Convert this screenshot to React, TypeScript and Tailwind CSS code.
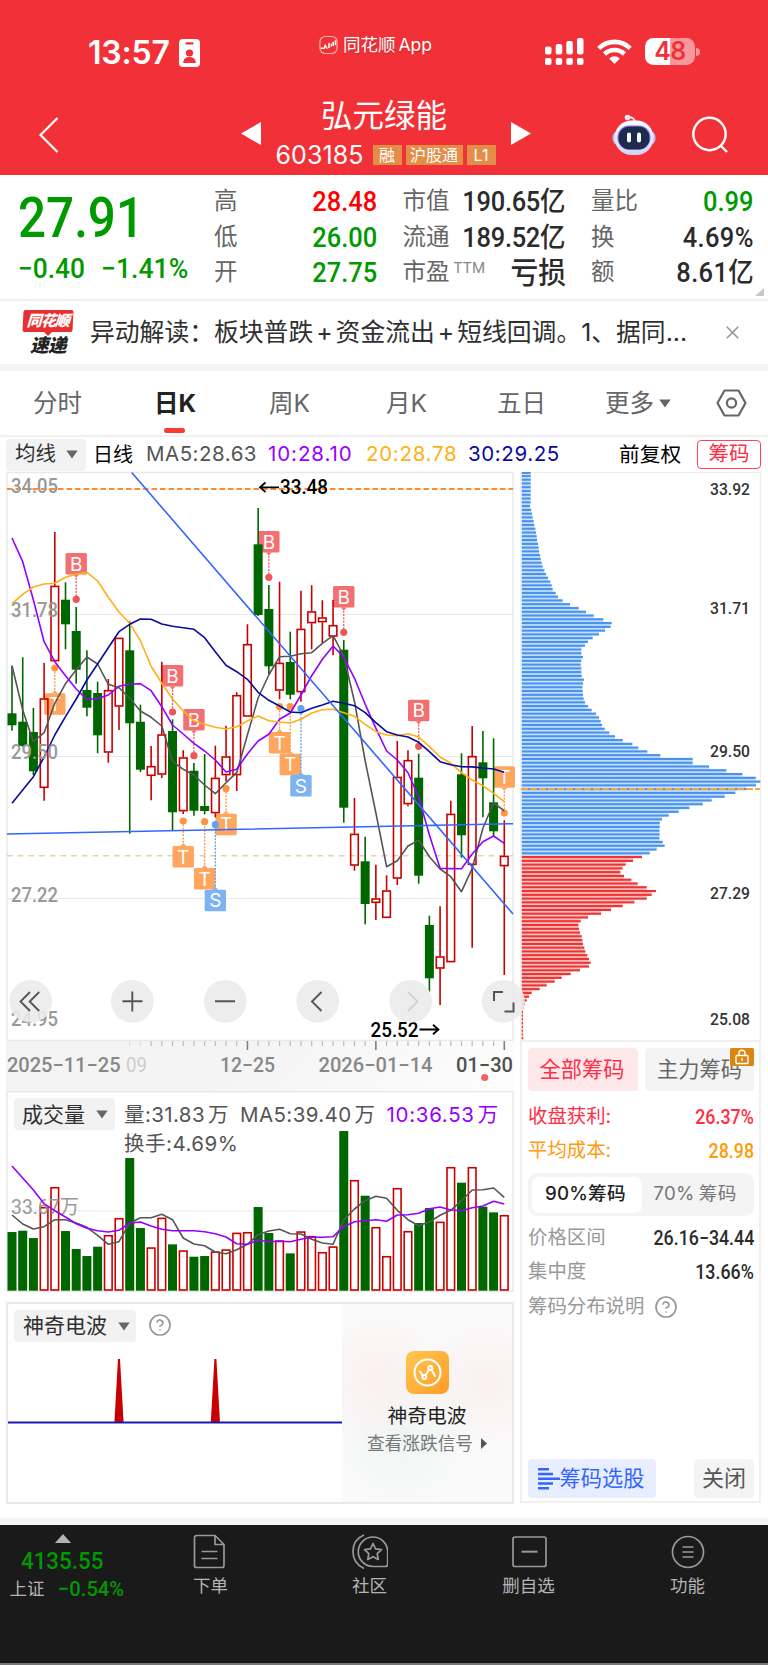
import type { ReactNode } from "react";
import { HelpCircle, X } from "lucide-react";

type Candle = [up: 0 | 1, high: number, top: number, bottom: number, low: number];

const candles: Candle[] = [
  [0, 665.7, 713.3, 725.3, 730.7],
  [0, 657.3, 721.7, 746, 746.7],
  [0, 708, 732, 771.3, 775],
  [1, 663, 698.3, 788, 800.7],
  [1, 532, 585.7, 661.3, 661.3],
  [0, 582.3, 599.7, 624.3, 649.3],
  [0, 607, 631, 669.7, 683.7],
  [0, 650.3, 690, 707.7, 716.3],
  [0, 681.7, 693, 735.3, 753.3],
  [1, 679, 690, 752.7, 762.7],
  [1, 637.7, 637.7, 706.7, 730],
  [0, 621.3, 650.3, 723.3, 833.7],
  [0, 704.7, 721.7, 769.7, 772],
  [1, 746, 766, 776, 800.3],
  [1, 661.7, 734.3, 774.7, 778],
  [0, 719.3, 731, 812.3, 830.7],
  [1, 750.3, 757.3, 811.3, 814],
  [0, 763, 770.7, 810.7, 815.7],
  [0, 754, 806, 811, 814.3],
  [1, 745.7, 777.7, 813.3, 817.3],
  [1, 725.7, 756.3, 775.3, 781.3],
  [1, 692.3, 695, 775.3, 791],
  [1, 624.3, 644, 716.7, 716.7],
  [0, 508, 544.3, 615, 616],
  [0, 585, 609, 666.3, 674],
  [1, 581.7, 662.7, 690.7, 699.3],
  [0, 631.7, 662, 694.7, 699.3],
  [1, 590.7, 628.7, 692.3, 701.7],
  [1, 585.3, 611.3, 623.3, 649.3],
  [1, 600.3, 617.3, 622.3, 643.7],
  [1, 600, 625, 636.7, 655.3],
  [0, 640, 649.7, 807.7, 822.7],
  [1, 798, 833.7, 865.7, 870.7],
  [0, 836.7, 861.3, 904, 924.3],
  [1, 864.7, 898.3, 903, 920],
  [1, 875.3, 890.3, 918, 918],
  [1, 741, 776.7, 878.7, 885],
  [1, 750.3, 760, 804.3, 806.3],
  [0, 753.7, 777.7, 875.7, 883.7],
  [0, 915.7, 925, 978.3, 991.7],
  [1, 906.3, 956.3, 968.7, 1005],
  [1, 800.7, 813.7, 962.3, 962.3],
  [0, 753.3, 774.3, 835.3, 857.7],
  [1, 726, 756, 865, 947.7],
  [0, 731, 762.3, 778.3, 817.3],
  [0, 738.3, 802.3, 831.3, 836],
  [1, 820.3, 855.7, 866.3, 975],
];

const ma5 = [
  665.7, 710, 741.7, 732.7, 703.3, 683.7, 669.7, 657, 664, 684.3, 687.7, 698.3, 711, 717.3, 726, 761.3,
  769.3, 775, 785, 793.7, 782.7, 772.7, 735, 698, 675, 656.7, 656.3, 653.7, 652.7, 643.3, 635.7, 656,
  701.7, 761, 813, 866.7, 860.7, 846, 840.3, 856.7, 869, 876.7, 891.7, 868.3, 828.3, 802.7, 811,
];
const ma10 = [
  538, 561.7, 600, 641.7, 661.7, 675.7, 689, 699.3, 698.7, 695, 686.3, 684, 683.7, 690.7, 706.7, 725,
  734, 743.3, 751, 760, 772, 769.3, 754, 741, 734.3, 719.3, 713, 695, 675.7, 659.3, 646, 657.3, 678.3,
  704.3, 728.3, 751, 760, 772.7, 797.3, 835, 868.3, 868.6, 868.7, 854, 841.7, 836, 843.3,
];
const ma20 = [
  603.7, 594.3, 587, 584, 583.3, 577.3, 574.3, 572.3, 581, 597.3, 612, 623.3, 640.7, 666.3, 683.3, 699,
  710.7, 721, 724.3, 727.3, 729, 726.7, 721, 716, 720.7, 722, 723, 719.3, 713, 709.7, 709.3, 712.7,
  716.3, 724.3, 731.7, 735, 735.7, 733.7, 737, 746.7, 757, 763.3, 772.7, 780, 785.7, 793.3, 801.7,
];
const ma30 = [
  803.3, 790, 776.7, 757, 735, 716.7, 699, 680, 664, 647.7, 631.7, 624.3, 619, 619.3, 624, 626.3, 627.7,
  629.3, 637.7, 651.7, 665.3, 671.7, 679.3, 692.3, 700.3, 706, 712, 712.7, 708.3, 705, 701.3, 703.3,
  705.7, 712.7, 722.7, 731.7, 735, 737, 742.3, 751.7, 761.7, 764.7, 766.7, 766.9, 768, 769, 772.3,
];

const markers: [kind: "B" | "T" | "S", index: number, boxTop: number, dot: number][] = [
  ["B", 6, 553, 599.3],
  ["B", 15, 665, 712],
  ["B", 17, 709, 755.7],
  ["B", 24, 531, 577.3],
  ["B", 31, 586, 632.3],
  ["B", 38, 699.7, 746.3],
  ["T", 4, 693.3, 668],
  ["T", 16, 846, 821],
  ["T", 18, 868, 821.7],
  ["T", 20, 813.7, 788.7],
  ["T", 25, 732, 706.7],
  ["T", 26, 753.7, 706.7],
  ["T", 46, 766.3, 813],
  ["S", 19, 889.7, 824.7],
  ["S", 27, 775, 708.7],
];

const markerColors = {
  B: ["#f27071", "#ee5758"],
  T: ["#ffa55e", "#ff9440"],
  S: ["#7db2f3", "#5ea3ec"],
};

const volumeHeights = [
  176, 180, 158, 251, 311, 179, 125, 104, 132, 167, 218, 398, 188, 130, 219, 139, 121, 102, 104, 118, 124,
  174, 176, 251, 173, 151, 112, 178, 164, 116, 133, 479, 332, 285, 191, 104, 308, 179, 203, 248, 207, 371,
  324, 371, 252, 235, 227,
];
const volMa5 = [
  390, 417, 432, 425, 404, 404, 414, 427, 451, 478, 470, 414, 398, 398, 388, 404, 459, 477, 482, 501, 506,
  494, 478, 449, 438, 433, 446, 447, 463, 474, 478, 404, 372, 347, 334, 340, 376, 404, 422, 411, 391, 376,
  347, 315, 314, 309, 337,
];
const volMa10 = [
  243, 279, 315, 356, 377, 396, 416, 430, 437, 441, 436, 414, 411, 423, 433, 437, 437, 437, 440, 446, 456,
  476, 478, 466, 470, 469, 470, 463, 457, 457, 455, 425, 410, 407, 404, 409, 390, 389, 385, 371, 366, 375,
  377, 368, 363, 349, 357,
];

// chip distribution, one entry per price level, top to bottom
const chips = [
  27, 27, 27, 27, 27, 27, 27, 27, 25, 29, 31, 33, 36, 38, 41, 43, 45, 46, 49, 51, 52, 55, 57, 60, 63, 68,
  73, 79, 86, 90, 93, 102, 109, 123, 145, 171, 193, 216, 245, 270, 267, 250, 232, 213, 199, 190, 179, 179,
  184, 179, 177, 179, 179, 180, 187, 184, 182, 183, 184, 186, 190, 199, 210, 223, 232, 237, 241, 249, 263,
  280, 303, 332, 350, 377, 416, 513, 513, 562, 614, 662, 702, 716, 703, 673, 641, 609, 570, 543, 503, 471,
  441, 421, 414, 414, 413, 414, 413, 423, 429, 405, 384, 361, 334, 312, 303, 296, 307, 329, 348, 375, 403,
  390, 375, 338, 303, 268, 238, 199, 177, 170, 172, 175, 180, 182, 184, 188, 191, 197, 202, 207, 202, 175,
  147, 120, 99, 75, 54, 30, 22, 15, 9, 5, 4, 4, 4, 4, 4, 4, 4, 5,
];
const FIRST_RED_CHIP = 101;

const cx = (i: number) => 12 + i * 10.702;
const toPoints = (ys: number[]) => ys.map((y, i) => `${cx(i).toFixed(1)},${y.toFixed(1)}`).join(" ");

const Label = ({
  x,
  y,
  w,
  size = 20,
  fill = "#999",
  weight = 400,
  children,
}: {
  x: number;
  y: number;
  w: number;
  size?: number;
  fill?: string;
  weight?: number;
  children: string;
}) => (
  <text
    x={x}
    y={y}
    fontSize={size}
    fill={fill}
    fontWeight={weight}
    textLength={w}
    lengthAdjust="spacingAndGlyphs"
    className="font-['Roboto','Noto_Sans_CJK_SC',sans-serif]"
  >
    {children}
  </text>
);

const Caret = () => (
  <svg viewBox="0 0 12 9" className="h-[9px] w-3 shrink-0" fill="#666">
    <path d="M0.3 0.5h11.4L6 8.6z" />
  </svg>
);

const StatusBar = () => (
  <div className="flex h-[104px] items-start pl-[88px]">
    <div className="mt-[34px] flex w-[231px] items-center gap-[8px]">
      <span className="w-[83px] text-[32px] leading-[38px] font-semibold tracking-[-0.2px]">13:57</span>
      <svg viewBox="0 0 21 28" className="h-7 w-[21px]">
        <rect width="21" height="28" rx="4" fill="#fff" />
        <rect x="6.5" y="3.2" width="8" height="2.4" rx="1.2" fill="#f23037" />
        <circle cx="10.5" cy="14" r="3.6" fill="#f23037" />
        <path d="M4.2 24c0-4 2.6-6 6.3-6s6.3 2 6.3 6z" fill="#f23037" />
      </svg>
    </div>
    <div className="mt-[33px] flex w-[225px] items-center gap-[5px] text-shadow-sm">
      <svg viewBox="0 0 20 20" className="h-5 w-[19px]" fill="none" stroke="#fff" strokeLinecap="round">
        <rect x="1" y="1" width="18" height="18" rx="5.5" strokeWidth="1.2" stroke="#ffb0b0" />
        <path d="M2.500 13.500h3l1-3 2 3" strokeWidth="1.500" />
        <path d="M10.500 8.500v4M13 9v2M15 7v3.500M17.300 5.500v4" strokeWidth="1.600" />
      </svg>
      <span className="text-[17.500px] leading-6 whitespace-nowrap">
        同花顺<span className="ml-[3px]">App</span>
      </span>
    </div>
    <svg viewBox="0 0 40 27" className="mt-[38px] h-[27px] w-10" fill="#fff">
      <rect x="1" y="8.500" width="6.500" height="8" rx="2" />
      <rect x="11.700" y="6" width="6.500" height="10.500" rx="2" />
      <rect x="22.300" y="3" width="6.500" height="13.500" rx="2" />
      <rect x="33" y="0" width="6.500" height="16.500" rx="2" />
      <rect x="1" y="20" width="6.500" height="7" rx="2" />
      <rect x="11.700" y="20" width="6.500" height="7" rx="2" />
      <rect x="22.300" y="20" width="6.500" height="7" rx="2" />
      <rect x="33" y="20" width="6.500" height="7" rx="2" />
    </svg>
    <svg viewBox="0 0 35 26" className="mt-[39px] ml-[13px] h-[26px] w-[35px]" fill="none" stroke="#fff" strokeWidth="4.600">
      <path d="M1.800 9.300a22.500 22.500 0 0 1 31.400 0" />
      <path d="M7.500 15a14.500 14.500 0 0 1 20 0" />
      <path d="M17.500 25l-5.300-5.500a7.600 7.600 0 0 1 10.600 0z" fill="#fff" stroke="none" />
    </svg>
    <div className="mt-[38px] ml-[13px] flex items-center gap-[1px]">
      <div className="flex h-[27px] w-[50px] items-center justify-center rounded-[8.500px] bg-linear-to-r from-white from-50% to-[#f9989c] to-50% text-[25px] leading-none font-semibold tracking-[-0.5px] text-[#f23037]">
        48
      </div>
      <div className="h-2 w-1 rounded-r-full bg-[#f9989c]" />
    </div>
  </div>
);

const Robot = () => (
  <svg viewBox="0 0 44 42" className="h-[42px] w-11">
    <defs>
      <linearGradient id="shell" x1="0" y1="0" x2="0" y2="1">
        <stop offset="0" stopColor="#fff" />
        <stop offset="1" stopColor="#cfd3f5" />
      </linearGradient>
    </defs>
    <path d="M23 9c0-4-1.500-5.500-6-6" fill="none" stroke="#e8e8f8" strokeWidth="2" />
    <circle cx="15.500" cy="3.500" r="2.800" fill="#e8e8f8" />
    <rect x="0.500" y="17" width="43" height="14" rx="6" fill="#b9bdf0" />
    <rect x="2.500" y="6.500" width="39" height="34.500" rx="17" fill="url(#shell)" />
    <rect x="5.500" y="11.500" width="33" height="24" rx="11.500" fill="#8d7be8" />
    <rect x="6.500" y="12.500" width="31" height="23" rx="11" fill="#1d2b4f" />
    <rect x="15" y="18.500" width="4" height="10" rx="2" fill="#fff" />
    <rect x="25" y="18.500" width="4" height="10" rx="2" fill="#fff" />
  </svg>
);

const TitleBar = () => (
  <div className="flex h-[70px] items-start">
    <svg viewBox="0 0 20 36" className="mt-[12.500px] ml-[39px] h-9 w-5" fill="none" stroke="#fff" strokeWidth="2.200">
      <path d="M18.500 1L1.500 18l17 17" />
    </svg>
    <svg viewBox="0 0 20 23" className="mt-[18px] ml-[182px] h-[23px] w-5" fill="#fff">
      <path d="M20 0v23L0 11.500z" />
    </svg>
    <div className="-mt-[11px] flex w-[250px] flex-col items-center">
      <h1 className="mr-[4px] text-[31.500px] leading-[46px]">弘元绿能</h1>
      <div className="mt-[1px] flex items-center gap-[4px] text-[16px] leading-5">
        <span className="mr-[4px] -ml-[1px] w-[89px] text-[25px] leading-[30px] tracking-[0.1px]">603185</span>
        <span className="w-[29px] bg-[#e28e46] text-center">融</span>
        <span className="w-[57px] bg-[#e28e46] text-center">沪股通</span>
        <span className="w-[29px] bg-[#e28e46] text-center">L1</span>
      </div>
    </div>
    <svg viewBox="0 0 20 23" className="mt-[18px] h-[23px] w-5" fill="#fff">
      <path d="M0 0v23L20 11.500z" />
    </svg>
    <div className="mt-[9.500px] ml-[81px]">
      <Robot />
    </div>
    <svg viewBox="0 0 37 37" className="mt-[12px] ml-[36px] h-[37px] w-[37px]" fill="none" stroke="#fff" strokeWidth="2.400">
      <circle cx="17.500" cy="18" r="16.200" />
      <path d="M28.500 29.500l6.500 6.500" />
    </svg>
  </div>
);

const Stat = ({ label, value, color = "text-[#2b2b2b]" }: { label: ReactNode; value: ReactNode; color?: string }) => (
  <div className="flex h-[35.500px] items-center justify-between">
    <span className="flex text-[23.500px] whitespace-nowrap text-[#666]">{label}</span>
    <span className={`origin-right scale-x-[0.925] text-[27.500px] leading-none font-medium whitespace-nowrap ${color}`}>
      {value}
    </span>
  </div>
);

const Quote = () => (
  <section className="flex h-[126px] border-b-2 border-[#eee] pt-[9px] font-['Roboto','Noto_Sans_CJK_SC',sans-serif]">
    <div className="w-[214px] pl-[18px] text-[#009900]">
      <div className="mt-[7px] h-[56px] origin-left scale-x-[0.89] text-[55.500px] leading-[56px] font-medium">27.91</div>
      <div className="mt-[4px] flex gap-[17px] text-[28px] leading-9 font-medium">
        <span className="w-[66px] origin-left scale-x-[0.94]">−0.40</span>
        <span className="origin-left scale-x-[0.95]">−1.41%</span>
      </div>
    </div>
    <div className="w-[163px]">
      <Stat label="高" value="28.48" color="text-[#ff0000]" />
      <Stat label="低" value="26.00" color="text-[#009900]" />
      <Stat label="开" value="27.75" color="text-[#009900]" />
    </div>
    <div className="ml-[25.500px] w-[163px]">
      <Stat label="市值" value={<span className="tracking-[-0.3px]">190.65亿</span>} />
      <Stat label="流通" value={<span className="tracking-[-0.3px]">189.52亿</span>} />
      <Stat
        label={
          <>
            市盈<span className="mt-[2px] ml-[4px] text-[15px] tracking-[0.2px] text-[#888]">TTM</span>
          </>
        }
        value={<span className="text-[30px]">亏损</span>}
      />
    </div>
    <div className="ml-[25.500px] w-[163px]">
      <Stat label="量比" value="0.99" color="text-[#009900]" />
      <Stat label="换" value={<span className="tracking-[0.4px]">4.69%</span>} />
      <Stat label="额" value={<span className="tracking-[0.4px]">8.61亿</span>} />
    </div>
    <svg viewBox="0 0 9 8" className="mt-auto mb-[3px] ml-[1px] h-2 w-[9px]" fill="#c8c8c8">
      <path d="M9 0v8H0z" />
    </svg>
  </section>
);

const News = () => (
  <section className="flex h-[70px] items-center border-b-[7px] border-[#f4f4f4] pl-[22px]">
    <div className="flex w-[68px] flex-col items-center pr-[16px]">
      <div className="w-[50px] -skew-x-3 rounded-[2px] bg-[#e93030] text-center text-[15px] leading-[22px] font-black tracking-[-0.8px] text-white italic">
        同花顺
      </div>
      <div className="border-x-4 border-t-4 border-transparent border-t-[#e93030]" />
      <div className="-mt-[1px] text-[18.500px] leading-5 font-black tracking-[-0.5px] text-[#222] italic">速递</div>
    </div>
    <p className="w-[632px] truncate text-[24.800px] whitespace-pre text-[#303030]">
      异动解读：板块普跌<span className="mx-[3px]">+</span>资金流出<span className="mx-[3px]">+</span>短线回调。1、据同...
    </p>
    <X className="h-[21px] w-[21px] text-[#999]" strokeWidth={2} />
  </section>
);

const Tabs = () => (
  <nav className="flex h-[66px] items-center border-b-2 border-[#f0f0f0] text-[24.500px] text-[#666]">
    <span className="ml-[33px] w-[121px]">分时</span>
    <span className="relative w-[115px] font-bold text-[#222]">
      日K
      <span className="absolute top-[43px] left-[9.500px] h-[5px] w-[21px] rounded-full bg-[#fc3a34]" />
    </span>
    <span className="w-[117px]">周K</span>
    <span className="w-[111px]">月K</span>
    <span className="w-[108px]">五日</span>
    <span className="flex w-[111px] items-center gap-[5px]">
      更多
      <Caret />
    </span>
    <svg viewBox="0 0 31 28" className="h-7 w-[31px]" fill="none" stroke="#666" strokeWidth="2.200">
      <path d="M8.500 1.500h14L29.500 14l-7 12.500h-14L1.500 14z" strokeLinejoin="round" />
      <circle cx="15.500" cy="14" r="4.600" />
    </svg>
  </nav>
);

const Averages = () => (
  <div className="flex h-[35px] items-center pl-[6px] text-[20.500px] whitespace-nowrap text-black">
    <div className="flex h-[32px] w-[80px] items-center gap-[10px] rounded-[4px] bg-[#f2f2f2] pl-[9px] text-[#303030]">
      均线
      <Caret />
    </div>
    <span className="ml-[7px] w-[53px] text-[20px]">日线</span>
    <span className="w-[122px] tracking-[0.5px] text-[#555]">MA5:28.63</span>
    <span className="w-[98px] tracking-[0.9px] text-[#9500ff]">10:28.10</span>
    <span className="w-[102px] tracking-[0.7px] text-[#ffb016]">20:28.78</span>
    <span className="w-[151px] tracking-[0.6px] text-[#0a0a9c]">30:29.25</span>
    <span className="w-[78px] text-[20.700px]">前复权</span>
    <span className="flex h-[29px] w-[64px] items-center justify-center rounded-[4px] border border-[#ff4058] text-[#ff2e45]">
      筹码
    </span>
  </div>
);

const buttonXs = [30.7, 132.3, 225.2, 317.7, 410.7, 503.3];

const KLine = () => (
  <svg viewBox="6 472 508 569" className="block h-[569px] w-[508px] overflow-visible">
    <rect x="7" y="472.500" width="506" height="568" fill="none" stroke="#e9e9e9" strokeWidth="1.500" />
    <path d="M7 614.500H513M7 756.500H513M7 898.500H513" stroke="#e9e9e9" strokeWidth="1.200" />
    <path d="M7 489H513" stroke="#ff8c32" strokeWidth="2" strokeDasharray="5.500 3" />
    <path d="M7 855.700H513" stroke="#e8cfae" strokeWidth="1.500" strokeDasharray="5.700 5" />

    {markers.map(([kind, i, top, dot]) => {
      const x = cx(i);
      const above = top < dot;
      const edge = above ? top + 21.500 : top;
      const [fill, accent] = markerColors[kind];
      return (
        <g key={kind + i}>
          <path d={`M${x} ${edge}V${dot}`} stroke={accent} strokeWidth="1.300" strokeDasharray="2 1.300" />
          <circle cx={x} cy={dot} r="3.600" fill={accent} />
          <rect x={x - 10.7} y={top} width="21.400" height="21.500" rx="1.500" fill={fill} />
          <path d={above ? `M${x - 3} ${edge}h6l-3 3z` : `M${x - 3} ${edge}h6l-3 -3z`} fill={fill} />
          <text x={x} y={top + 17.7} textAnchor="middle" fontSize="19" fill="#fff" className="font-['Inter']">
            {kind}
          </text>
        </g>
      );
    })}

    {candles.map(([up, high, top, bottom, low], i) =>
      up ? (
        <g key={i} stroke="#c80000" strokeWidth="1.600" fill="none">
          <path d={`M${cx(i)} ${high}V${top}M${cx(i)} ${bottom}V${low}`} />
          <rect x={cx(i) - 3.8} y={top + 0.7} width="7.600" height={bottom - top - 1.4} />
        </g>
      ) : (
        <g key={i} fill="#006600">
          <rect x={cx(i) - 0.8} y={high} width="1.600" height={low - high} />
          <rect x={cx(i) - 4.5} y={top} width="9" height={bottom - top} />
        </g>
      ),
    )}

    <g fill="none" strokeWidth="1.600" strokeLinejoin="round">
      <polyline points={toPoints(ma5)} stroke="#555" />
      <polyline points={toPoints(ma10)} stroke="#9500ff" />
      <polyline points={toPoints(ma20)} stroke="#ffb016" />
      <polyline points={toPoints(ma30)} stroke="#0a0a9c" />
      <path d="M131.700 472.500L513 914M7 834L513 823.700" stroke="#3366ff" />
    </g>

    <Label x={11} y={492.7} w={47} weight={500}>34.05</Label>
    <Label x={11} y={617.3} w={47} weight={500}>31.78</Label>
    <Label x={11} y={759.3} w={47} weight={500}>29.50</Label>
    <Label x={11} y={901.7} w={47} weight={500}>27.22</Label>
    <Label x={11} y={1026} w={47} weight={500}>24.95</Label>

    <g stroke="#000" strokeWidth="1.800" fill="none">
      <path d="M279 487.300H260M265.500 482.500L260 487.300l5.500 4.800M419.500 1029.500H438M433 1024.700l5.500 4.800-5.500 4.800" />
    </g>
    <Label x={280} y={494.3} w={48} fill="#000" weight={500}>33.48</Label>
    <Label x={370.5} y={1037.3} w={48} fill="#000" weight={500}>25.52</Label>

    {buttonXs.map((x) => (
      <circle key={x} cx={x} cy="1001.300" r="21.400" fill="#eaeaea" fillOpacity="0.880" />
    ))}
    <g fill="none" stroke="#555" strokeWidth="1.900">
      <path d="M30 992l-9.500 9.500 9.500 9.500M39.200 992l-9.500 9.500 9.500 9.500" />
      <path d="M122.500 1001.300h20M132.300 991.500v20M215 1001.300h20M321.500 992l-9.500 9.500 9.500 9.500" />
      <path d="M408 992l9.500 9.500-9.500 9.500" stroke="#d2d2d2" />
      <path d="M494 1001v-9h9M513.500 1002.500v9h-9" strokeWidth="2" />
    </g>
  </svg>
);

const TimeAxis = () => (
  <svg viewBox="6 1041 508 50" className="block h-[50px] w-[508px]">
    <defs>
      <linearGradient id="axis" x1="0" x2="1" y1="0" y2="0.100">
        <stop offset="0" stopColor="#f4f4f4" />
        <stop offset="0.500" stopColor="#f4f4f4" />
        <stop offset="1" stopColor="#fcfcfc" />
      </linearGradient>
    </defs>
    <rect x="6" y="1041" width="508" height="50" fill="url(#axis)" />
    {candles.map((_, i) => {
      if (i < 11) return null;
      const major = i === 22 || i === 34 || i === 46;
      return (
        <path
          key={i}
          d={`M${cx(i)} 1041v${major ? 9 : 5}`}
          stroke={major ? "#808080" : i < 13 ? "#ddd" : "#bbb"}
          strokeWidth={major ? 1.6 : 1.2}
        />
      );
    })}
    <Label x={7} y={1071.7} w={113.5} fill="#888" weight={500}>2025−11−25</Label>
    <Label x={126} y={1071.7} w={21} fill="#ccc">09</Label>
    <Label x={220} y={1071.7} w={55} fill="#888" weight={500}>12−25</Label>
    <Label x={318.5} y={1071.7} w={114} fill="#888" weight={500}>2026−01−14</Label>
    <Label x={456} y={1071.7} w={57} fill="#505050" weight={500}>01−30</Label>
    <circle cx="484.700" cy="1077.500" r="3.600" fill="#f56161" />
  </svg>
);

const Volume = () => (
  <div className="relative h-[201px] w-[508px]">
    <svg viewBox="6 1091 508 201" className="block h-[201px] w-[508px]">
      <rect x="7" y="1091.700" width="506" height="199.600" fill="none" stroke="#e9e9e9" strokeWidth="1.500" />
      <path d="M7 1211H513" stroke="#e9e9e9" strokeWidth="1.200" />
      {volumeHeights.map((h, i) => {
        const top = 1290.7 - h / 3;
        return candles[i][0] ? (
          <rect key={i} x={cx(i) - 3.8} y={top + 0.7} width="7.600" height={h / 3 - 1.4} fill="#fff" stroke="#c80000" strokeWidth="1.600" />
        ) : (
          <rect key={i} x={cx(i) - 4.5} y={top} width="9" height={h / 3} fill="#006600" />
        );
      })}
      <Label x={11} y={1214.3} w={68}>33.67万</Label>
      <g fill="none" strokeWidth="1.600" strokeLinejoin="round">
        <polyline points={toPoints(volMa5.map((v) => 1085 + v / 3))} stroke="#555" />
        <polyline points={toPoints(volMa10.map((v) => 1085 + v / 3))} stroke="#9500ff" />
      </g>
    </svg>
    <div className="absolute top-[7px] left-[8px] flex text-[20.500px] leading-[29px] whitespace-nowrap text-[#555]">
      <div className="flex h-8 w-[101px] items-center gap-[11px] rounded-[4px] bg-[#f2f2f2] pl-[8px] text-[21px] text-[#303030]">
        成交量
        <Caret />
      </div>
      <div className="mt-[2px] ml-[9px]">
        <div className="flex">
          <span className="w-[116px] tracking-[0.4px]">量:31.83<span className="ml-[3px]">万</span></span>
          <span className="w-[146.500px] tracking-[0.4px]">MA5:39.40<span className="ml-[3px]">万</span></span>
          <span className="tracking-[0.7px] text-[#9500ff]">10:36.53<span className="ml-[3px]">万</span></span>
        </div>
        <div className="tracking-[0.5px]">换手:4.69%</div>
      </div>
    </div>
  </div>
);

const MagicWave = () => (
  <div className="mt-[10px] flex h-[202px] w-[508px] border-2 border-[#eaeaea]">
    <div className="w-[334px]">
      <div className="flex h-[48px] items-start pt-[6px] pl-[6px]">
        <div className="flex h-8 w-[122px] items-center gap-[11px] rounded-[4px] bg-[#f2f2f2] pl-[9px] text-[21px] text-[#303030]">
          神奇电波
          <Caret />
        </div>
        <HelpCircle className="mt-[3px] ml-[12px] h-6 w-6 text-[#999]" strokeWidth={1.7} />
      </div>
      <svg viewBox="8 1352 334 90" className="block h-[90px] w-[334px]">
        <path d="M118 1359h2l3.600 63.500h-9.200zM214.400 1359h2l3.600 63.500h-9.200z" fill="#c80000" />
        <path d="M8 1422.400H342" stroke="#1a1ab0" strokeWidth="2" />
      </svg>
    </div>
    <div className="flex flex-1 flex-col items-center bg-[#fafafa] bg-[radial-gradient(ellipse_at_22%_36%,#fbf0f0_0%,transparent_38%),radial-gradient(ellipse_at_85%_40%,#faf0f0_0%,transparent_40%),radial-gradient(ellipse_at_35%_62%,#eef5f3_0%,transparent_48%)] pt-[47px]">
      <svg viewBox="0 0 43 43" className="h-[43px] w-[43px]" fill="none" stroke="#fff" strokeWidth="2" strokeLinecap="round">
        <defs>
          <linearGradient id="wave" x1="0" y1="0" x2="1" y2="1">
            <stop offset="0" stopColor="#ffc850" />
            <stop offset="1" stopColor="#ff9c28" />
          </linearGradient>
        </defs>
        <rect width="43" height="43" rx="8" fill="url(#wave)" stroke="none" />
        <circle cx="21.500" cy="21.500" r="13" />
        <path d="M14 20.500l3 4.500M19.500 24.500l3.500-6M25.500 18.500l3.500 6.500" />
        <circle cx="18.300" cy="26" r="2" />
        <circle cx="24.300" cy="17" r="2" />
      </svg>
      <div className="mt-[8px] text-[19.800px] leading-7 text-[#222]">神奇电波</div>
      <div className="flex items-center gap-[8px] text-[17.700px] leading-[27px] text-[#777]">
        查看涨跌信号
        <svg viewBox="0 0 6 11" className="h-[11px] w-[6px]" fill="#555">
          <path d="M0 0l6 5.500L0 11z" />
        </svg>
      </div>
    </div>
  </div>
);

const ChipChart = () => (
  <svg viewBox="520 472 241 568" className="block h-[568px] w-[241px]">
    <path d="M520.700 1040V472.500H760.300V1040" fill="none" stroke="#eee" strokeWidth="1.200" />
    <rect x="521.700" y="472" width="9" height="2" fill="#4793ef" />
    {chips.map((len, i) => {
      const y = 475.9 + i * 3.774;
      const red = i >= FIRST_RED_CHIP;
      const next = Math.min(len, chips[i + 1] ?? 0);
      return (
        <g key={i} fill={red ? "#ee3333" : "#4793ef"}>
          <rect x="521.700" y={y - 1.1} width={len / 3} height="2.200" />
          <rect x="521.700" y={y + 1.1} width={next / 3} height="1.574" fillOpacity="0.300" />
        </g>
      );
    })}
    <path d="M521 789H760" stroke="#f5a93b" strokeWidth="1.800" strokeDasharray="7 2" />
    <Label x={710} y={495.4} w={40} size={17} fill="#333" weight={500}>33.92</Label>
    <Label x={710} y={614.4} w={40} size={17} fill="#333" weight={500}>31.71</Label>
    <Label x={710} y={756.6} w={40} size={17} fill="#333" weight={500}>29.50</Label>
    <Label x={710} y={898.9} w={40} size={17} fill="#333" weight={500}>27.29</Label>
    <Label x={710} y={1024.5} w={40} size={17} fill="#333" weight={500}>25.08</Label>
  </svg>
);

const ChipRow = ({ label, value, color = "text-[#999]", valueColor = "" }: {
  label: string;
  value: string;
  color?: string;
  valueColor?: string;
}) => (
  <div className={`flex h-[34px] items-center justify-between ${color}`}>
    <span className="text-[19.400px]">{label}</span>
    <span className={`origin-right scale-x-[0.89] font-['Roboto'] text-[20px] font-medium ${valueColor}`}>{value}</span>
  </div>
);

const ChipPanel = () => (
  <div className="flex h-[463px] flex-col border-2 border-[#f0f0f0] pt-[6px] pr-[5px] pb-[3px] pl-[6px]">
    <div className="flex justify-between text-[21.200px]">
      <div className="flex h-[43px] w-[110px] items-center justify-center rounded-[4px] bg-[#ffe8ea] pr-[2px] text-[#ff2e45]">
        全部筹码
      </div>
      <div className="relative flex h-[43px] w-[109px] items-center justify-center rounded-[4px] bg-[#f4f4f4] text-[#666]">
        主力筹码
        <svg viewBox="0 0 24 18" className="absolute top-0 right-0 h-[18px] w-6" fill="none" stroke="#fff" strokeWidth="1.400">
          <rect width="24" height="18" rx="1.500" fill="#dc850f" stroke="none" />
          <rect x="6" y="7.500" width="12" height="8" rx="1" />
          <path d="M9 7.500V5.200a3 3 0 0 1 6 0v2.300M12 10v3" />
        </svg>
      </div>
    </div>
    <div className="mt-[9px]">
      <ChipRow label="收盘获利:" value="26.37%" color="text-[#ff2e45]" />
      <ChipRow label="平均成本:" value="28.98" color="text-[#ff9a0a]" />
    </div>
    <div className="mt-[5px] flex h-[43px] rounded-[9px] bg-[#f4f4f4] p-[3.500px] text-[18.700px]">
      <div className="flex w-[110px] items-center justify-center rounded-[7px] bg-white pr-[2px] font-medium tracking-[0.2px] whitespace-nowrap text-[#222]">
        90%筹码
      </div>
      <div className="flex flex-1 items-center justify-center pr-[2px] tracking-[0.3px] whitespace-nowrap text-[#777]">
        70%<span className="ml-1">筹码</span>
      </div>
    </div>
    <div className="mt-[5px] text-[#999]">
      <ChipRow label="价格区间" value="26.16−34.44" valueColor="text-[#2b2b2b]" />
      <ChipRow label="集中度" value="13.66%" valueColor="text-[#2b2b2b]" />
      <div className="mt-[1px] flex h-[34px] items-center gap-[10px] text-[19.400px]">
        筹码分布说明
        <HelpCircle className="h-6 w-6" strokeWidth={1.7} />
      </div>
    </div>
    <div className="mt-auto flex justify-between text-[21.200px]">
      <div className="flex h-[39px] w-[128px] items-center justify-center rounded-[4px] bg-[#e8eeff] pr-[2px] text-[#3366ff]">
        <svg viewBox="0 0 22 22" className="h-[22px] w-[22px]" fill="#3366ff">
          <path d="M0 0h11v2.500H0zM0 4.700h15v2.500H0zM0 9.500h22v2.500H0zM0 14.300h15v2.500H0zM0 19h11v2.500H0z" />
        </svg>
        筹码选股
      </div>
      <div className="flex h-[39px] w-[60px] items-center justify-center rounded-[4px] bg-[#f4f4f4] text-[22px] text-[#555]">
        关闭
      </div>
    </div>
  </div>
);

const NavItem = ({ label, children }: { label: string; children: ReactNode }) => (
  <div className="flex w-[159px] flex-col items-center">
    <svg viewBox="0 0 36 36" className="h-9 w-9" fill="none" stroke="#999" strokeWidth="1.700">
      {children}
    </svg>
    <span className="mt-[2px] text-[17.500px] leading-7 text-[#b4b4b4]">{label}</span>
  </div>
);

const BottomBar = () => (
  <footer className="flex h-[140px] border-b-2 border-[#777] bg-[#1a1a1a] pt-[9px]">
    <div className="w-[131px] font-['Roboto','Noto_Sans_CJK_SC',sans-serif] text-[#009900]">
      <svg viewBox="0 0 16 9" className="ml-[55px] h-[9px] w-4" fill="#b4b4b4">
        <path d="M8 0l8 9H0z" />
      </svg>
      <div className="mt-[2px] ml-[21px] origin-left scale-x-[0.93] text-[24px] leading-8 font-medium">4135.55</div>
      <div className="mt-[-2px] ml-[9.500px] flex items-center text-[21px] leading-7 font-medium">
        <span className="w-[48px] text-[17.500px] font-normal text-[#b4b4b4]">上证</span>
        <span className="origin-left scale-x-[0.96]">−0.54%</span>
      </div>
    </div>
    <NavItem label="下单">
      <path d="M1.500 3.500a2 2 0 0 1 2-2H22l9 9v21a2 2 0 0 1-2 2H3.500a2 2 0 0 1-2-2zM22 1.500v9h9M8.500 17.500h16M8.500 24.500h16" />
    </NavItem>
    <NavItem label="社区">
      <path d="M12 1C4.500 4 1 10.500 1 17.500s3.500 13.500 11 17M21 3a14.700 14.700 0 0 1 14.700 14.700V30a2.500 2.500 0 0 1-2.500 2.500H21A14.700 14.700 0 0 1 21 3z" />
      <path d="M21 9.500l2.600 5.300 5.900.8-4.300 4.100 1 5.800-5.200-2.800-5.200 2.800 1-5.800-4.300-4.100 5.900-.8z" strokeLinejoin="round" />
    </NavItem>
    <NavItem label="删自选">
      <rect x="2" y="3" width="33" height="29.500" rx="2" />
      <path d="M10.500 17.700h16" strokeWidth="2" />
    </NavItem>
    <NavItem label="功能">
      <circle cx="18" cy="18" r="15.500" />
      <path d="M12.500 13h11M12.500 18h11M12.500 23h11" />
    </NavItem>
  </footer>
);

export default function App() {
  return (
    <div className="h-[1665px] w-[768px] overflow-hidden bg-white font-['Inter','Noto_Sans_CJK_SC',sans-serif]">
      <header className="h-[175px] bg-[#f23037] text-white">
        <StatusBar />
        <TitleBar />
      </header>
      <Quote />
      <News />
      <Tabs />
      <Averages />
      <main className="flex h-[1046px] items-start gap-[6px] pl-[6px]">
        <div className="z-10 w-[508px]">
          <KLine />
          <TimeAxis />
          <Volume />
          <MagicWave />
        </div>
        <div className="w-[241px]">
          <ChipChart />
          <ChipPanel />
        </div>
      </main>
      <div className="h-[7px] bg-[#f4f4f4]" />
      <BottomBar />
    </div>
  );
}
